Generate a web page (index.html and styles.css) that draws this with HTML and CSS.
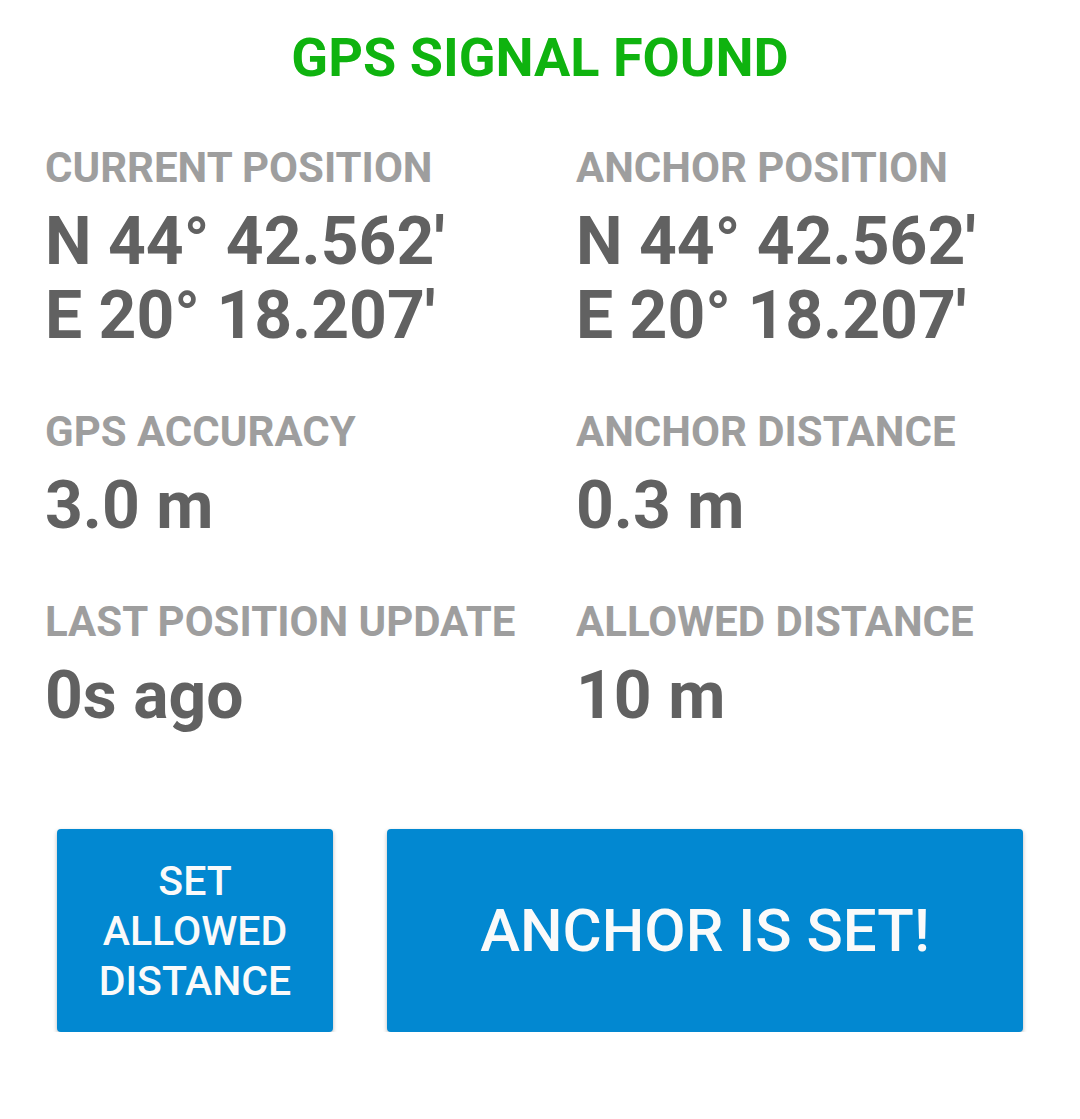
FILE: index.html
```html
<!DOCTYPE html>
<html lang="en">
<head>
  <meta charset="UTF-8">
  <meta name="viewport" content="width=device-width, initial-scale=1.0"/>
  <title>Anchor Alarm</title>
  <link rel="stylesheet" href="styles.css">
</head>
<body>
  <main class="screen">
    <!-- GPS status -->
    <h1 class="status">GPS SIGNAL FOUND</h1>

    <!-- Readings -->
    <section class="readings">
      <div class="reading">
        <div class="label">CURRENT POSITION</div>
        <div class="value">N 44° 42.562'<br>E 20° 18.207'</div>
      </div>
      <div class="reading">
        <div class="label">ANCHOR POSITION</div>
        <div class="value">N 44° 42.562'<br>E 20° 18.207'</div>
      </div>
      <div class="reading">
        <div class="label">GPS ACCURACY</div>
        <div class="value">3.0 m</div>
      </div>
      <div class="reading">
        <div class="label">ANCHOR DISTANCE</div>
        <div class="value">0.3 m</div>
      </div>
      <div class="reading">
        <div class="label">LAST POSITION UPDATE</div>
        <div class="value">0s ago</div>
      </div>
      <div class="reading">
        <div class="label">ALLOWED DISTANCE</div>
        <div class="value">10 m</div>
      </div>
    </section>

    <!-- Actions -->
    <div class="actions">
      <button class="btn btn-small">SET ALLOWED DISTANCE</button>
      <button class="btn btn-large">ANCHOR IS SET!</button>
    </div>
  </main>
</body>
</html>
```

FILE: styles.css
```css
/* --- Vars and reset --- */
:root {
  --green: #0fb30f;
  --label: #9e9e9e;
  --value: #616161;
  --blue: #0288d1;
  --font: Roboto, 'Noto Sans', sans-serif;
}
* { box-sizing: border-box; margin: 0; padding: 0; }
body { font-family: var(--font); background: #fff; width: 1080px; }

.screen { padding-top: 26px; }

/* --- Status --- */
.status {
  text-align: center;
  color: var(--green);
  font-size: 54px;
  line-height: 64px;
  font-weight: 700;
}

/* --- Readings grid --- */
.readings {
  display: grid;
  grid-template-columns: 531px 1fr;
  row-gap: 54px;
  padding: 53px 0 0 45px;
}
.reading { display: flex; flex-direction: column; gap: 12px; }
.label {
  color: var(--label);
  font-size: 42px;
  line-height: 50px;
  font-weight: 700;
  white-space: nowrap;
}
.value {
  color: var(--value);
  font-size: 66px;
  line-height: 74px;
  font-weight: 700;
  white-space: nowrap;
}

/* --- Buttons --- */
.actions {
  display: flex;
  gap: 54px;
  padding: 96px 57px 0;
}
.btn {
  height: 203px;
  border: none;
  border-radius: 4px;
  background: var(--blue);
  color: #fafafa;
  font-family: var(--font);
  font-weight: 500;
  box-shadow: 0 2px 4px rgba(0,0,0,0.28);
}
.btn-small {
  width: 276px;
  padding: 0 24px;
  font-size: 41px;
  line-height: 50px;
}
.btn-large {
  flex: 1;
  font-size: 60px;
}
```
